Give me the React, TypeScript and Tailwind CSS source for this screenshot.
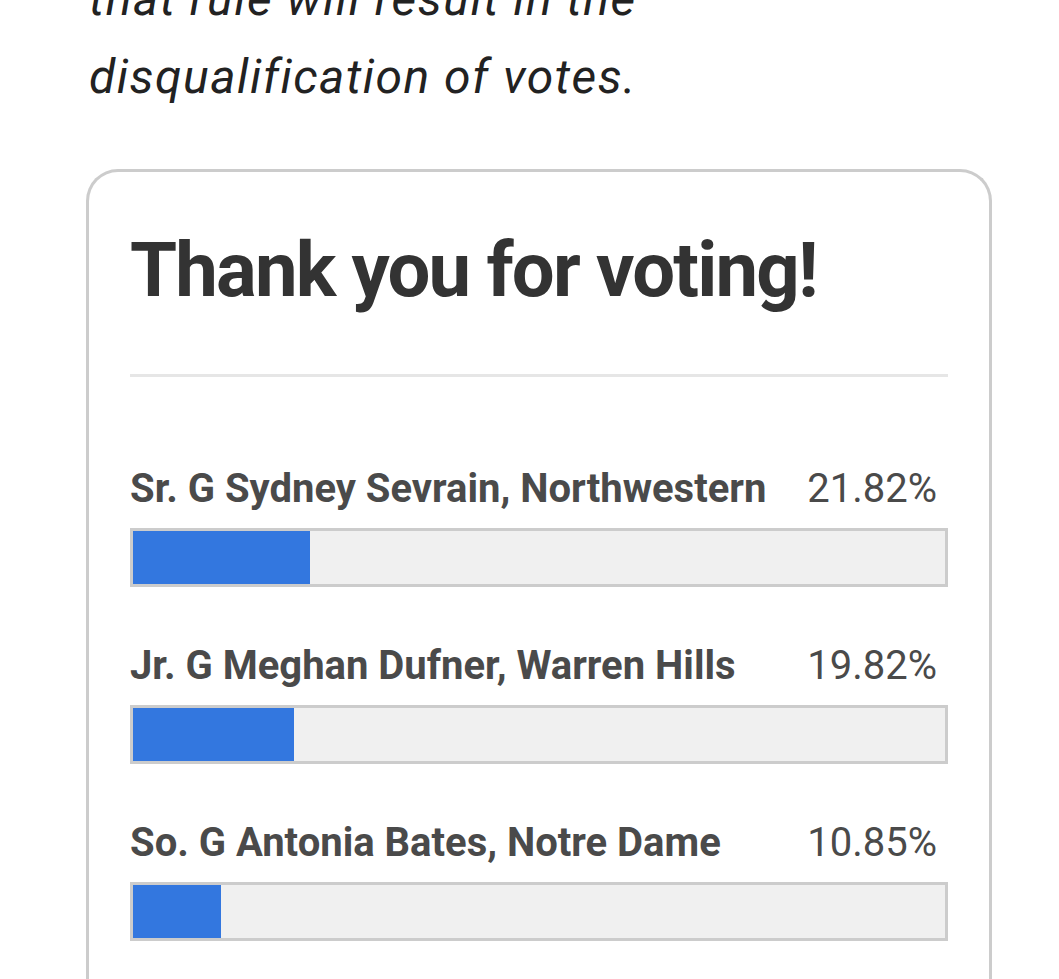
import React from "react";

type Result = {
  name: string;
  pct: number;
};

const RESULTS: Result[] = [
  { name: "Sr. G Sydney Sevrain, Northwestern", pct: 21.82 },
  { name: "Jr. G Meghan Dufner, Warren Hills", pct: 19.82 },
  { name: "So. G Antonia Bates, Notre Dame", pct: 10.85 },
];

const ResultRow: React.FC<{ result: Result }> = ({ result }) => {
  return (
    <div className="mb-[53px]">
      <div className="flex items-baseline justify-between pr-[11px] text-[40px] leading-[52px] text-[#4a4a4a]">
        <span className="font-bold">{result.name}</span>
        <span>{result.pct.toFixed(2)}%</span>
      </div>
      <div className="mt-[13px] h-[59px] border-[3px] border-[#cccccc] bg-[#f0f0f0]">
        {/* bar width comes from the vote share */}
        <div className="h-full bg-[#3377df]" style={{ width: `${result.pct}%` }} />
      </div>
    </div>
  );
};

export default function App() {
  return (
    <div className="flex h-[979px] w-[1059px] flex-col overflow-hidden bg-white font-['Roboto',sans-serif]">
      <p className="-mt-[40px] pl-[89px] text-[48px] italic leading-[78px] tracking-[1.5px] text-[#222222]">
        that rule will result in the
        <br />
        disqualification of votes.
      </p>

      <div className="ml-[86px] mr-[67px] mt-[53px] flex-1 rounded-t-[32px] border-[3px] border-b-0 border-[#cccccc] px-[41px] pt-[52px]">
        <h2 className="text-[76px] font-bold leading-[92px] tracking-[-1.8px] text-[#333333]">Thank you for voting!</h2>
        <div className="mt-[58px] h-[3px] bg-[#e6e6e6]" />
        <div className="mt-[86px]">
          {RESULTS.map((r) => (
            <ResultRow key={r.name} result={r} />
          ))}
        </div>
      </div>
    </div>
  );
}
